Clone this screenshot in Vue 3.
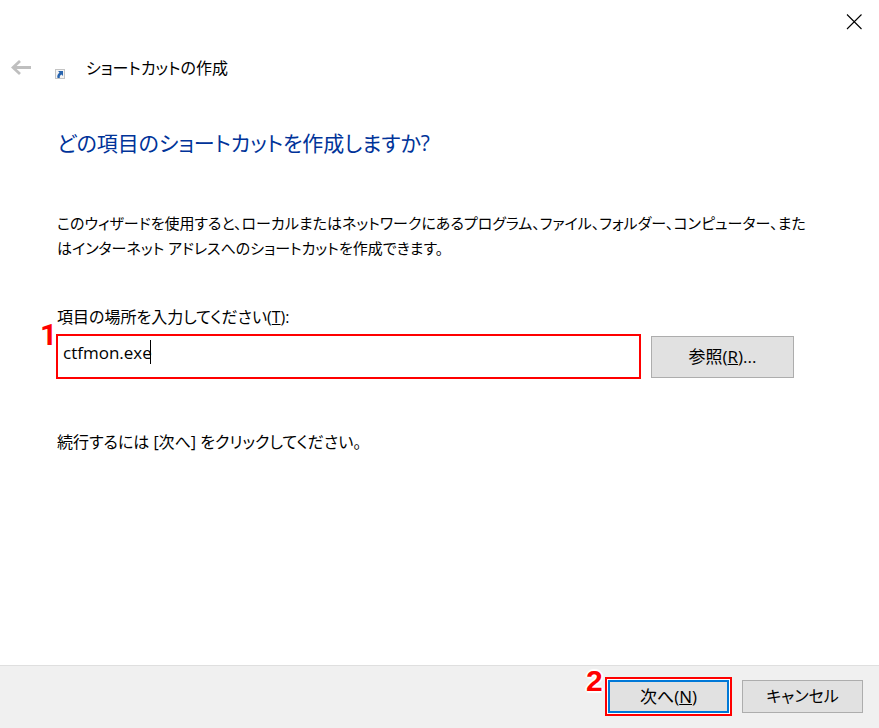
<script setup>
import { ref } from 'vue'

const location = ref('ctfmon.exe')
</script>

<template>
  <main class="wizard">
    <div class="titlebar">
      <button class="close" type="button" aria-label="閉じる">
        <svg width="16" height="16" viewBox="0 0 16 16" aria-hidden="true">
          <path d="M1 0.5L15.5 15M15.5 0.5L1 15" fill="none" stroke="#000" stroke-width="1.1" />
        </svg>
      </button>
    </div>

    <header class="header">
      <button class="back" type="button" aria-label="戻る" disabled>
        <svg width="20" height="16" viewBox="0 0 20 16" aria-hidden="true">
          <path d="M9 1L2 7.500L9 14M2 7.500H20" fill="none" stroke="#bfbfbf" stroke-width="2.8" />
        </svg>
      </button>
      <svg class="shortcut" width="10" height="10" viewBox="0 0 10 10" aria-hidden="true">
        <rect x="0.5" y="0.5" width="9" height="9" fill="#f4f4f4" stroke="#c4c4c4" />
        <path d="M3 2H8V7L6.500 5.500C5 6.500 4.500 7.500 4.800 9H2.500C1.800 7 2.700 5 4.500 3.600Z" fill="#2864ae" />
      </svg>
      <span class="title">ショートカットの作成</span>
    </header>

    <section class="content">
      <h1>どの項目のショートカットを作成しますか?</h1>
      <p class="intro">
        このウィザードを使用すると、ローカルまたはネットワークにあるプログラム、ファイル、フォルダー、コンピューター、また<br />はインターネット アドレスへのショートカットを作成できます。
      </p>
      <label for="location">項目の場所を入力してください(<u>T</u>):</label>
      <div class="row">
        <div class="field">
          <input id="location" v-model="location" type="text" accesskey="t" spellcheck="false" />
          <span class="caret"></span>
          <span class="step step-one">1</span>
        </div>
        <button class="button browse" type="button" accesskey="r">参照(<u>R</u>)...</button>
      </div>
      <p class="hint">続行するには [次へ] をクリックしてください。</p>
    </section>

    <footer class="footer">
      <div class="highlight">
        <button class="button primary" type="button" accesskey="n">次へ(<u>N</u>)</button>
        <span class="step step-two">2</span>
      </div>
      <button class="button" type="button">キャンセル</button>
    </footer>
  </main>
</template>

<style>
body {
  background: #fff;
}
</style>

<style scoped>
* {
  box-sizing: border-box;
}

.wizard {
  display: flex;
  flex-direction: column;
  min-height: 100vh;
  color: #000;
  background: #fff;
  font: 400 16px/25px "Open Sans", "Noto Sans CJK JP", sans-serif;
  font-feature-settings: "palt";
}

button,
input {
  font: inherit;
  font-feature-settings: inherit;
  color: inherit;
}

.titlebar {
  display: flex;
  justify-content: flex-end;
  height: 43px;
}

.close,
.back {
  display: flex;
  align-items: center;
  justify-content: center;
  padding: 0;
  border: 0;
  background: none;
}

.close {
  width: 50px;
}

.header {
  display: flex;
  align-items: center;
  height: 49px;
  padding-left: 11px;
}

.shortcut {
  margin: 12px 21px 0 24px;
}

.title {
  padding-top: 2px;
}

.content {
  flex: 1;
  padding: 33px 57px 0;
}

h1 {
  margin: 0;
  color: #003399;
  font-size: 21px;
  font-weight: 400;
  line-height: 36px;
}

.intro {
  margin: 50px 0 44px;
  font-size: 15px;
}

label {
  display: block;
}

.row {
  display: flex;
  align-items: center;
  gap: 10px;
  margin: 4px 28px 0 -1px;
}

.field {
  position: relative;
  flex: 1;
}

input {
  display: block;
  width: 100%;
  height: 45px;
  padding: 0 5px 8px;
  border: 2px solid #f00;
  border-radius: 0;
  outline: 0;
  background: #fff;
  font-size: 17px;
}

.caret {
  position: absolute;
  top: 6px;
  left: 94px;
  width: 1px;
  height: 24px;
  background: #000;
}

.step {
  position: absolute;
  color: #f00;
  font: bold 30px/30px "Liberation Sans", sans-serif;
  text-shadow: 0 0 2px #fff, 2px 0 1px #fff, -2px 0 1px #fff, 0 2px 1px #fff, 0 -2px 1px #fff;
}

.step-one {
  top: -14px;
  left: -16px;
  font-family: Roboto, sans-serif;
}

.step-two {
  top: -13px;
  left: -21px;
}

.button {
  width: 121px;
  height: 33px;
  padding: 0;
  border: 1px solid #adadad;
  background: #e1e1e1;
}

.browse {
  width: 143px;
  height: 42px;
  font-size: 17px;
}

.hint {
  margin: 51px 0 0;
}

.footer {
  display: flex;
  align-items: center;
  justify-content: flex-end;
  gap: 10px;
  height: 63px;
  padding: 0 16px 1px 0;
  border-top: 1px solid #dfdfdf;
  background: #f0f0f0;
}

.highlight {
  position: relative;
  padding: 1px;
  border: 2px solid #f00;
  background: #fff;
}

.primary {
  display: block;
  border: 2px solid #0078d7;
  font-size: 17px;
}
</style>
